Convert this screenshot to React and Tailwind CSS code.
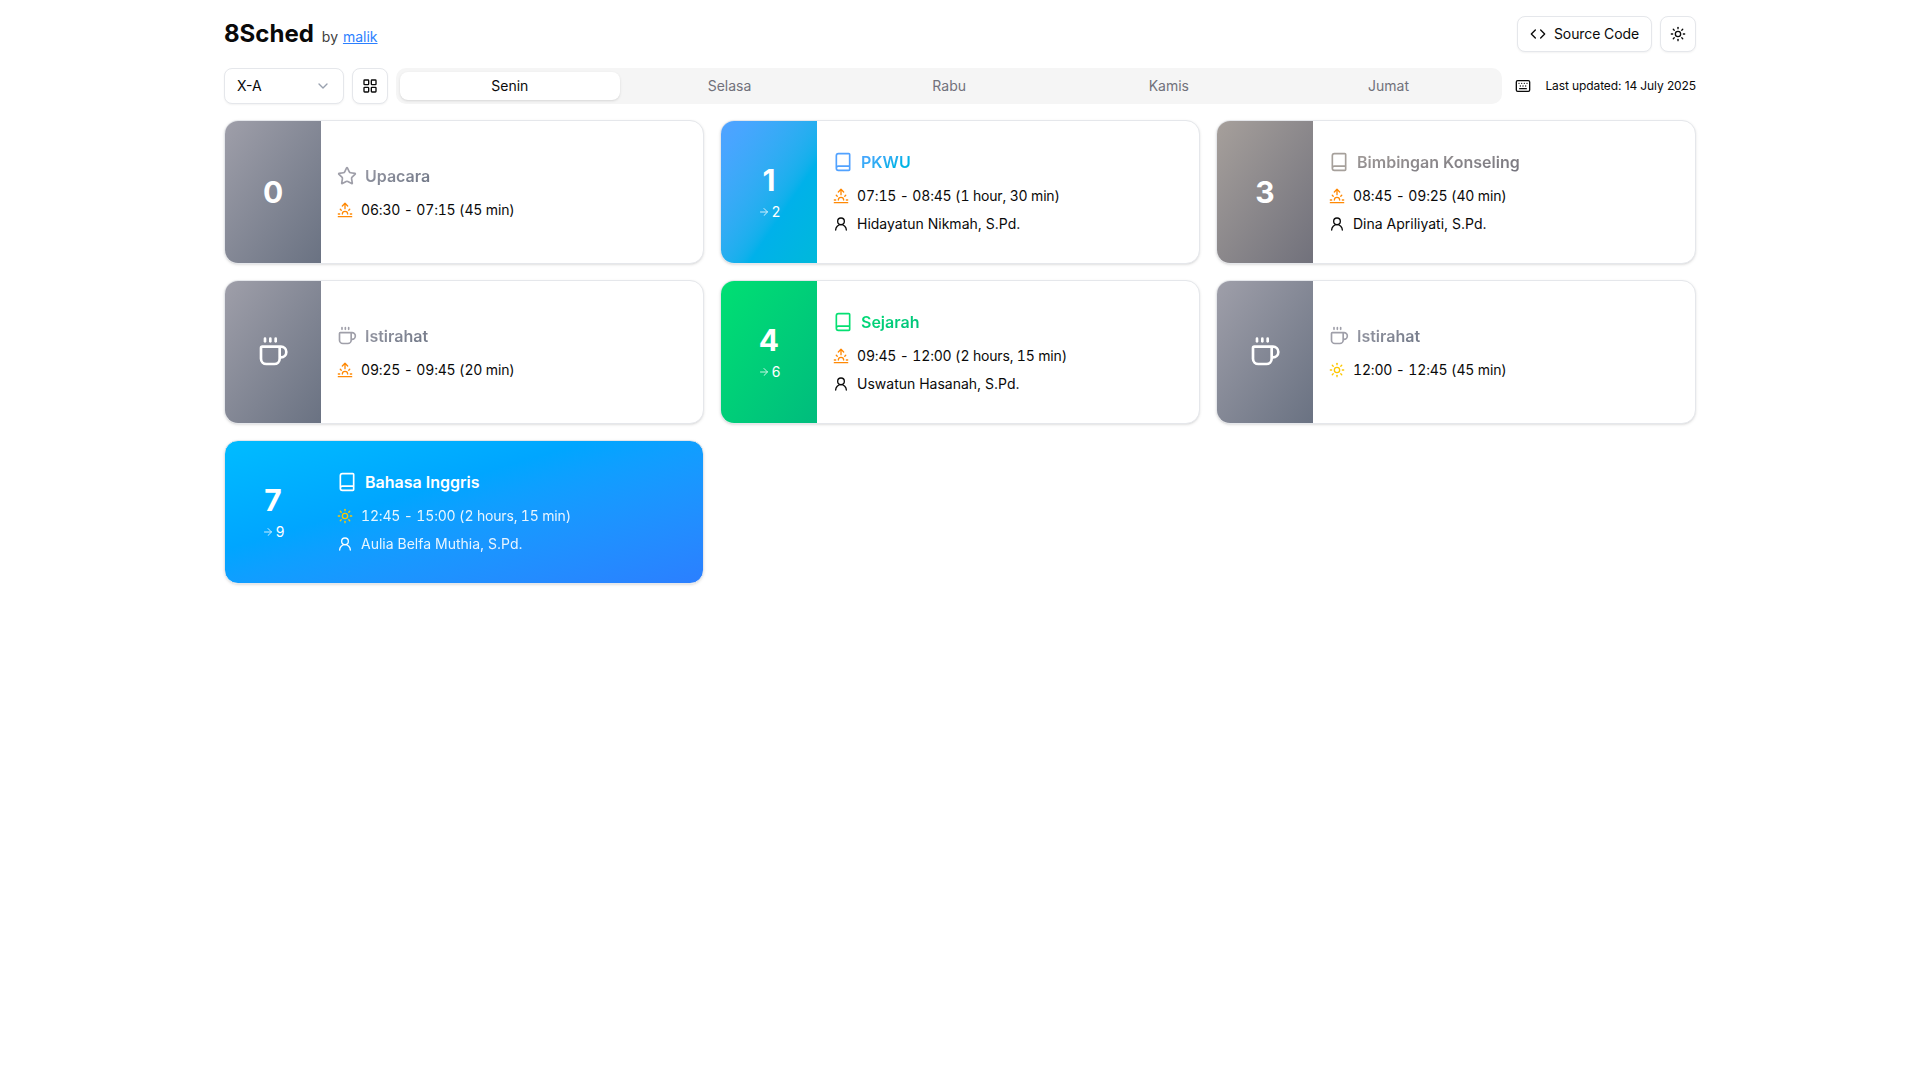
import React from 'react';
import { ArrowRight, Book, ChevronDown, Code, Coffee, Keyboard, LayoutGrid, Star, Sun, Sunrise, UserRound } from 'lucide-react';

const gray = { pane: 'from-zinc-400 to-gray-500', text: 'from-zinc-400 to-gray-500', icon: 'text-zinc-400' };
const stone = { pane: 'from-stone-400 to-zinc-500', text: 'from-stone-400 to-zinc-500', icon: 'text-stone-400' };
const blue = { pane: 'from-blue-400 to-cyan-500', text: 'from-blue-400 to-cyan-500', icon: 'text-blue-400' };
const green = { pane: 'from-green-400 to-emerald-500', text: 'from-green-400 to-emerald-500', icon: 'text-green-400' };

const periods = [
  { no: '0', title: 'Upacara', icon: Star, time: '06:30 - 07:15 (45 min)', color: gray },
  { no: '1', to: '2', title: 'PKWU', icon: Book, time: '07:15 - 08:45 (1 hour, 30 min)', teacher: 'Hidayatun Nikmah, S.Pd.', color: blue },
  { no: '3', title: 'Bimbingan Konseling', icon: Book, time: '08:45 - 09:25 (40 min)', teacher: 'Dina Apriliyati, S.Pd.', color: stone },
  { rest: true, title: 'Istirahat', icon: Coffee, time: '09:25 - 09:45 (20 min)', color: gray },
  { no: '4', to: '6', title: 'Sejarah', icon: Book, time: '09:45 - 12:00 (2 hours, 15 min)', teacher: 'Uswatun Hasanah, S.Pd.', color: green },
  { rest: true, title: 'Istirahat', icon: Coffee, time: '12:00 - 12:45 (45 min)', color: gray, noon: true },
];

function PaneNumber({ p }) {
  if (p.rest) return <Coffee size={32} />;
  return (
    <>
      <div className="text-3xl leading-9 font-bold">{p.no}</div>
      {p.to && (
        <div className="mt-1 flex items-center gap-0.5 text-sm leading-5">
          <ArrowRight size={12} className="opacity-80" />
          <span>{p.to}</span>
        </div>
      )}
    </>
  );
}

function PeriodCard({ p }) {
  const Icon = p.icon;
  const TimeIcon = p.noon ? Sun : Sunrise;
  return (
    <div className="h-36 flex rounded-[14px] border border-gray-200 bg-white shadow-sm overflow-hidden">
      <div className={`w-24 shrink-0 flex flex-col items-center justify-center text-white bg-gradient-to-br ${p.color.pane}`}>
        <PaneNumber p={p} />
      </div>
      <div className="flex-1 px-4 flex flex-col justify-center text-sm text-neutral-950">
        <div className="mb-3 flex items-center gap-2 text-base font-semibold">
          <Icon size={20} className={p.color.icon} />
          <span className={`bg-gradient-to-br bg-clip-text text-transparent ${p.color.text}`}>{p.title}</span>
        </div>
        <div className="flex items-center gap-2 leading-5">
          <TimeIcon size={16} className={p.noon ? 'text-yellow-400' : 'text-orange-400'} />
          <span className="tabular-nums tracking-[-0.17px]">{p.time}</span>
        </div>
        {p.teacher && (
          <div className="mt-2 flex items-center gap-2 leading-5">
            <UserRound size={16} />
            <span>{p.teacher}</span>
          </div>
        )}
      </div>
    </div>
  );
}

function CurrentCard() {
  return (
    <div className="h-36 flex rounded-[14px] border border-gray-200 shadow-sm overflow-hidden text-white bg-gradient-to-br from-sky-400 to-blue-500">
      <div className="w-24 shrink-0 flex flex-col items-center justify-center">
        <PaneNumber p={{ no: '7', to: '9' }} />
      </div>
      <div className="flex-1 px-4 flex flex-col justify-center text-sm">
        <div className="mb-3 flex items-center gap-2 text-base font-semibold">
          <Book size={20} />
          <span>Bahasa Inggris</span>
        </div>
        <div className="flex items-center gap-2 leading-5">
          <Sun size={16} className="text-yellow-400" />
          <span className="tabular-nums tracking-[-0.17px] opacity-90">12:45 - 15:00 (2 hours, 15 min)</span>
        </div>
        <div className="mt-2 flex items-center gap-2 leading-5">
          <UserRound size={16} />
          <span className="opacity-90">Aulia Belfa Muthia, S.Pd.</span>
        </div>
      </div>
    </div>
  );
}

export default function App() {
  const days = ['Senin', 'Selasa', 'Rabu', 'Kamis', 'Jumat'];

  return (
    <div className="min-h-screen bg-white font-['Inter',sans-serif] text-neutral-950">
      <div className="w-[1472px] mx-auto py-4">
        <header className="h-9 flex items-center justify-between">
          <div className="flex items-baseline gap-2">
            <h1 className="text-2xl font-bold">8Sched</h1>
            <span className="text-sm text-neutral-700">
              by <a href="#" className="ml-px text-blue-500 underline">malik</a>
            </span>
          </div>
          <div className="flex items-center gap-2">
            <button className="h-9 px-3 flex items-center gap-2 rounded-lg border border-gray-200 bg-white shadow-xs text-sm tracking-[-0.1px]">
              <Code size={16} />
              Source Code
            </button>
            <button className="size-9 flex items-center justify-center rounded-lg border border-gray-200 bg-white shadow-xs">
              <Sun size={16} />
            </button>
          </div>
        </header>

        <div className="mt-4 flex items-center gap-2">
          <div className="w-30 h-9 px-3 flex items-center justify-between rounded-lg border border-gray-200 bg-white shadow-xs text-sm">
            X-A
            <ChevronDown size={16} className="text-gray-400" />
          </div>
          <button className="size-9 flex items-center justify-center rounded-lg border border-gray-200 bg-white shadow-xs">
            <LayoutGrid size={16} />
          </button>
          <div className="flex-1 h-9 p-1 flex rounded-[10px] bg-neutral-100">
            {days.map((d, i) => (
              <div
                key={d}
                className={i === 0
                  ? 'flex-1 flex items-center justify-center rounded-lg bg-white shadow-sm text-sm'
                  : 'flex-1 flex items-center justify-center rounded-lg text-sm text-zinc-500'}
              >
                {d}
              </div>
            ))}
          </div>
          <div className="ml-[5px] flex items-center gap-3.5 text-xs">
            <Keyboard size={16} />
            <span className="tracking-[-0.1px]">Last updated: 14 July 2025</span>
          </div>
        </div>

        <div className="mt-4 grid grid-cols-3 gap-4">
          {periods.map((p, i) => <PeriodCard key={i} p={p} />)}
          <CurrentCard />
        </div>
      </div>
    </div>
  );
}
